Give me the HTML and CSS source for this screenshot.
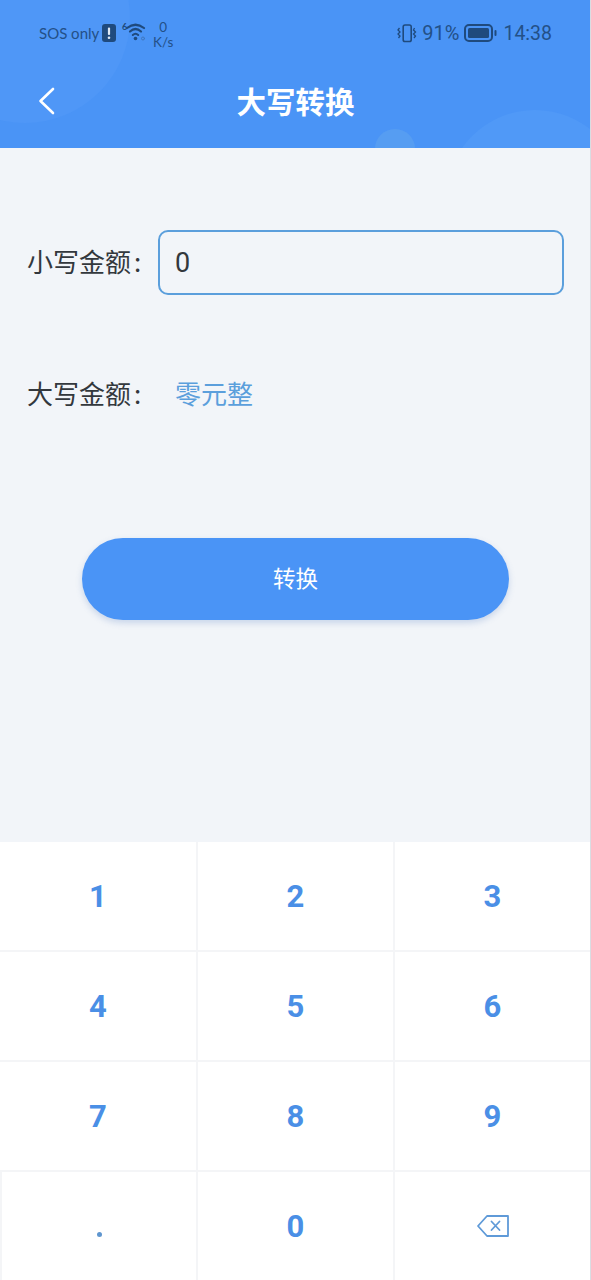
FILE: index.html
```html
<!DOCTYPE html>
<html lang="zh">
<head>
<meta charset="utf-8">
<title>大写转换</title>
<link rel="stylesheet" href="styles.css">
</head>
<body>
<div class="page">
  <header class="header">
    <span class="blob blob-a"></span>
    <span class="blob blob-b"></span>
    <span class="blob blob-c"></span>
    <div class="status">
      <div class="status-left">
        <span class="sos">SOS only</span>
        <svg class="alert" width="14" height="18" viewBox="0 0 14 18"><rect x="0" y="0" width="14" height="18" rx="3" fill="#1f4a7d"/><rect x="5.900" y="3.500" width="2.200" height="7.500" rx="1" fill="#dfe9f5"/><circle cx="7" cy="13.800" r="1.300" fill="#dfe9f5"/></svg>
        <svg class="wifi" width="27" height="19" viewBox="0 0 27 19" fill="none" stroke="#1f4a7d" stroke-linecap="round"><path d="M6 6 Q14.500 -0.500 23 6" stroke-width="2.200"/><path d="M9 9.500 Q14.500 4.500 20 9.500" stroke-width="2.200"/><path d="M11.800 13 Q14.500 10.500 17.200 13" stroke-width="2"/><circle cx="14.500" cy="16.500" r="1.800" fill="#1f4a7d" stroke="none"/><circle cx="22" cy="16.500" r="1.500" stroke="#3f76bd" stroke-width="1"/></svg>
        <span class="six">6</span>
        <span class="speed"><span>0</span><span>K/s</span></span>
      </div>
      <div class="status-right">
        <svg class="vibe" width="20" height="20" viewBox="0 0 20 20" fill="none" stroke="#1f4a7d"><rect x="6.200" y="2" width="8" height="16.500" rx="1.800" stroke-width="1.600"/><path d="M2.500 5 L1 7 L3 9 L1 11 L3 13 L1.500 15" stroke-width="1.300"/><path d="M17.500 5 L16.500 7 L18.500 9 L16.500 11 L18.500 13 L17 15" stroke-width="1.300"/></svg>
        <span class="pct">91%</span>
        <svg class="battery" width="33" height="18" viewBox="0 0 33 18" fill="none"><rect x="1" y="1" width="27" height="16" rx="4" stroke="#1f4a7d" stroke-width="2"/><rect x="4" y="4" width="21" height="10" rx="1.500" fill="#1f4a7d"/><rect x="30.500" y="6" width="2" height="6" rx="1" fill="#1f4a7d"/></svg>
        <span class="time">14:38</span>
      </div>
    </div>
    <div class="nav">
      <svg class="back" width="17" height="28" viewBox="0 0 17 28" fill="none" stroke="#fff" stroke-width="2.600" stroke-linecap="round" stroke-linejoin="round"><path d="M15 2 L2.500 14 L15 26"/></svg>
      <h1 class="title">大写转换</h1>
    </div>
  </header>

  <main class="content">
    <div class="row row-input">
      <span class="label">小写金额<span class="colon">:</span></span>
      <div class="input">0</div>
    </div>
    <div class="row row-result">
      <span class="label">大写金额<span class="colon">:</span></span>
      <span class="result">零元整</span>
    </div>
    <button class="convert">转换</button>
  </main>

  <section class="keypad">
    <div class="key">1</div>
    <div class="key">2</div>
    <div class="key">3</div>
    <div class="key">4</div>
    <div class="key">5</div>
    <div class="key">6</div>
    <div class="key">7</div>
    <div class="key">8</div>
    <div class="key">9</div>
    <div class="key key-dot"><span class="dot"></span></div>
    <div class="key">0</div>
    <div class="key">
      <svg width="32" height="22" viewBox="0 0 32 22" fill="none" stroke="#5f9ad8" stroke-width="1.800" stroke-linejoin="round"><path d="M10 1 H31 V21 H10 L1 11 Z"/><path d="M14.500 6.500 L22.500 15 M22.500 6.500 L14.500 15" stroke-linecap="round"/></svg>
    </div>
  </section>
</div>
</body>
</html>
```
FILE: styles.css
```css
* { box-sizing: border-box; }
html, body { margin: 0; padding: 0; }
body {
  background: #f2f5f9;
  font-family: "Noto Sans CJK SC", "Noto Sans", sans-serif;
}
.page {
  width: 591px;
  height: 1280px;
  display: flex;
  flex-direction: column;
  border-right: 1px solid #d9dde2;
  overflow: hidden;
}

/* Header */
.header {
  position: relative;
  height: 148px;
  flex: none;
  background: #4a94f6;
  overflow: hidden;
  width: 591px;
}
.blob { position: absolute; border-radius: 50%; }
.blob-a { left: -80px; top: -87px; width: 210px; height: 210px; background: #4f97f7; }
.blob-b { left: 375px; top: 129px; width: 40px; height: 40px; background: #569df2; }
.blob-c { left: 446px; top: 110px; width: 178px; height: 178px; background: #5099f7; }

.status {
  position: relative;
  height: 66px;
  display: flex;
  justify-content: space-between;
  align-items: flex-start;
  padding: 18px 39px 0 39px;
  color: #1f4a7d;
  font-family: "Roboto", "Noto Sans", sans-serif;
}
.status-left { display: flex; align-items: center; height: 30px; position: relative; font-family: "Lato", "Noto Sans", sans-serif; }
.sos { font-size: 15px; line-height: 30px; width: 62px; white-space: nowrap; color: #235087; }
.alert { margin-left: 1px; margin-top: -1px; }
.wifi { margin-left: 5px; margin-top: -4px; }
.six { position: absolute; left: 83px; top: 4px; font-size: 9px; font-weight: 700; line-height: 10px; }
.speed {
  display: flex;
  flex-direction: column;
  align-items: center;
  font-size: 13.500px;
  line-height: 15px;
  margin-left: 5px;
  margin-top: 3px;
  color: #235087;
}
.status-right { display: flex; align-items: center; height: 30px; font-size: 20px; color: #235087; }
.vibe { margin-right: 5px; }
.battery { margin-left: 5px; margin-right: 6px; }
.time { font-size: 19.500px; }

.nav { position: relative; height: 82px; display: flex; align-items: center; justify-content: center; }
.back { position: absolute; left: 38px; top: 21px; }
.title {
  margin: 0 0 14px;
  font-size: 29.500px;
  font-weight: 700;
  line-height: 40px;
  color: #fff;
}

/* Content */
.content { flex: 1; padding: 0 26px 0 27px; }
.row { display: flex; align-items: center; }
.row-input { margin-top: 82px; height: 65px; }
.row-result { margin-top: 67px; height: 65px; }
.label { width: 131px; margin-bottom: 4px; font-size: 26px; line-height: 36px; color: #33383d; white-space: nowrap; flex: none; }
.colon { margin-left: 3px; }
.input {
  width: 407px;
  height: 65px;
  border: 2px solid #5b9fdc;
  border-radius: 10px;
  padding-left: 15px;
  font-family: "Roboto", sans-serif;
  font-size: 27px;
  line-height: 63px;
  color: #33383d;
}
.result { margin-bottom: 4px; padding-left: 17px; font-size: 26px; line-height: 36px; color: #5b9fdc; }
.convert {
  display: block;
  width: 427px;
  height: 82px;
  margin: 111px 0 0 55px;
  border: 0;
  border-radius: 41px;
  background: #4a94f6;
  box-shadow: 0 3px 6px rgba(74, 120, 190, 0.25);
  color: #fff;
  font-family: inherit;
  font-size: 22.500px;
  line-height: 78px;
  padding: 0 0 4px;
}

/* Keypad */
.keypad {
  flex: none;
  height: 438px;
  display: grid;
  grid-template-columns: 198px 197px 195px;
  grid-template-rows: 110px 110px 110px 108px;
  background: #fff;
}
.key {
  display: flex;
  align-items: center;
  justify-content: center;
  border-right: 2px solid #f4f5f7;
  border-bottom: 2px solid #f4f5f7;
  font-family: "Roboto", sans-serif;
  font-size: 31px;
  font-weight: 700;
  color: #4a8fe6;
}
.key:nth-child(3n) { border-right: 0; }
.key:nth-child(n+10) { border-bottom: 0; }
.key-dot { border-left: 2px solid #f4f5f7; }
.dot { width: 5px; height: 5px; border-radius: 50%; background: #5f96cf; margin-top: 16px; }
```
